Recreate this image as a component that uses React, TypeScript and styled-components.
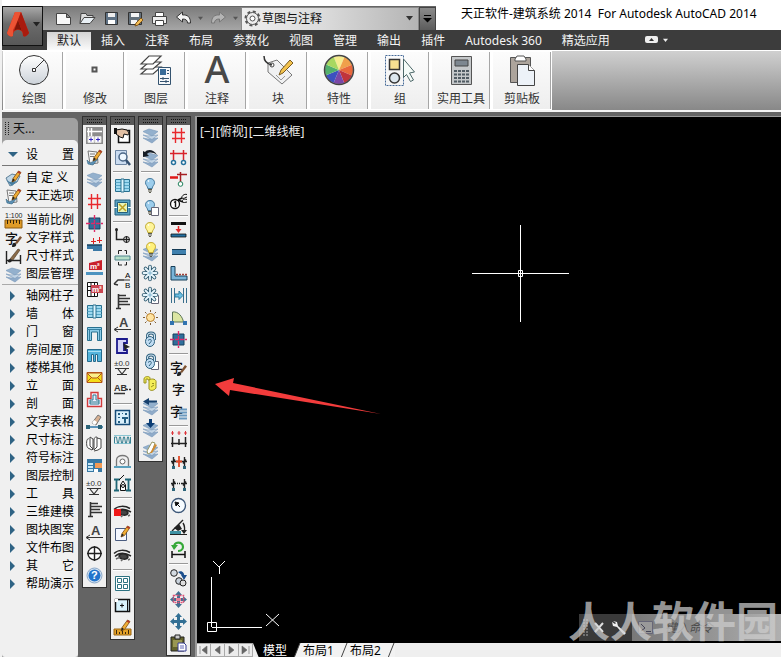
import React from "react";
import styled, { createGlobalStyle, css } from "styled-components";

const GlobalStyle = createGlobalStyle`
  *, *::before, *::after { box-sizing: border-box; }
  html, body { margin: 0; padding: 0; background: #fff; }
  body, button, select, input {
    font-family: "Noto Sans", "Noto Sans CJK SC", sans-serif;
    font-size: 12px;
    color: #111;
  }
  button { border: 0; padding: 0; background: none; cursor: pointer; }
  svg { display: block; flex: none; }
`;

/* ---------- page frame ---------- */

const Shell = styled.div`
  min-height: 100vh;
  display: flex;
  flex-direction: column;
  border-left: 2px solid #f0f0f0;
  overflow: hidden;
`;

const Header = styled.header`
  display: grid;
  grid-template-columns: 41px 1fr;
  grid-template-rows: 30px 20px;
  background: linear-gradient(#fff 0 30px, #3c3c3c 30px);
`;

const AppButton = styled.button`
  grid-row: 1 / 3;
  margin: 6px 0 4px;
  padding-bottom: 4px;
  border: 1px solid #111;
  background: linear-gradient(#a8a8a8, #6a6a6a 45%, #585858);
  display: flex;
  align-items: center;
  justify-content: center;
  gap: 3px;
`;

const TitleBar = styled.div`
  display: flex;
  align-items: stretch;
  min-width: 0;
`;

const QuickAccess = styled.div`
  margin-top: 6px;
  padding-left: 8px;
  display: flex;
  align-items: center;
  background: linear-gradient(#7c7c7c, #a6a6a6);
  border-top: 1px solid #666;
`;

const QuickButton = styled.button<{ $narrow?: boolean }>`
  width: ${(p) => (p.$narrow ? 11 : 24)}px;
  height: 23px;
  display: flex;
  align-items: center;
  justify-content: center;
`;

const Workspace = styled.label`
  width: 178px;
  height: 24px;
  display: flex;
  align-items: center;
  padding: 0 5px 0 2px;
  background: linear-gradient(90deg, #eee, #dcdcdc 45%, #b4b4b4);
  border: 1px solid #888;
`;

const WorkspaceSelect = styled.select`
  appearance: none;
  flex: 1;
  min-width: 0;
  border: 0;
  padding: 0 0 0 1px;
  background: transparent;
`;

const MoreButton = styled.button`
  width: 17px;
  height: 24px;
  display: flex;
  align-items: center;
  justify-content: center;
  background: linear-gradient(#8a8a8a, #5c5c5c);
  border: 1px solid #444;
`;

const Title = styled.h1`
  margin: 0;
  padding-left: 25px;
  font-size: 12px;
  line-height: 28px;
  font-weight: 400;
  white-space: pre;
  color: #000;
`;

const Tabs = styled.nav`
  display: flex;
  align-items: flex-end;
  padding-left: 4px;
  background: #3c3c3c;
`;

const Tab = styled.button<{ $active?: boolean }>`
  height: 18px;
  padding: 0 10px;
  line-height: 18px;
  color: #f4f4f4;
  white-space: nowrap;
  ${(p) =>
    p.$active &&
    css`
      color: #222;
      background: linear-gradient(#d4d4d4, #fafafa);
    `}
`;

const MinimizeTab = styled.button`
  height: 20px;
  margin-left: 25px;
  display: flex;
  align-items: center;
  gap: 5px;
`;

/* ---------- ribbon ---------- */

const Ribbon = styled.section`
  display: flex;
  height: 62px;
  padding-left: 1px;
  border-top: 1px solid #fff;
  border-bottom: 2px solid #f4f4f4;
  background: linear-gradient(#d0d0d0, #888);
`;

const Panel = styled.button`
  width: 61px;
  display: flex;
  flex-direction: column;
  align-items: center;
  background: linear-gradient(#fcfcfc, #eee);
  border: solid #fff;
  border-width: 1px 1px 1px 2px;
  box-shadow: inset -1px 0 #a6a6a6;
`;

const PanelPicture = styled.span`
  height: 38px;
  display: flex;
  align-items: center;
`;

const PanelLabel = styled.span`
  line-height: 20px;
  color: #333;
  white-space: nowrap;
`;

/* ---------- working area ---------- */

const Body = styled.main`
  flex: 1;
  display: flex;
  align-items: flex-start;
  background: #646464;
  padding: 4px 0 1px;
`;

const SideMenu = styled.aside`
  width: 76px;
  align-self: stretch;
  margin-top: 2px;
  margin-right: 4px;
  background: #a0a0a0;
  border-radius: 0 5px 0 0;
`;

const SideTitle = styled.div`
  height: 22px;
  display: flex;
  align-items: center;
  gap: 3px;
  padding-left: 3px;
  line-height: 22px;
`;

const SideContent = styled.div`
  height: calc(100% - 22px);
  background: #f0f0f0;
  border-radius: 5px 5px 3px 3px;
  padding-bottom: 64px;
`;

const MenuHead = styled.button`
  width: 100%;
  height: 26px;
  display: flex;
  align-items: center;
  padding: 4px 4px 0 3px;
  border-bottom: 1px solid #777;
  margin-bottom: 3px;
`;

const MenuRow = styled.button`
  width: 100%;
  height: 18px;
  display: flex;
  align-items: center;
  padding: 0 4px 0 3px;
`;

const MenuMark = styled.span`
  width: 21px;
  flex: none;
`;

const MenuText = styled.span<{ $spread?: boolean }>`
  width: 48px;
  line-height: 18px;
  white-space: ${(p) => (p.$spread ? "normal" : "nowrap")};
  text-align: left;
  text-align-last: ${(p) => (p.$spread ? "justify" : "left")};
  color: #000;
`;

const MenuRule = styled.hr<{ $tight?: boolean }>`
  margin: ${(p) => (p.$tight ? "1px 0 2px" : "2px 0 3px")};
  border: 0;
  border-top: 1px solid #aaa;
`;

const Toolbars = styled.div`
  display: flex;
  align-items: flex-start;
  gap: 3px;
  margin-right: 4px;
`;

const Toolbar = styled.div`
  width: 25px;
  border: 1px solid #303030;
  background: #f0f0f0;
`;

const Grip = styled.div`
  height: 8px;
  background: #585858;
  display: flex;
  align-items: center;
  justify-content: center;
`;

const ToolButton = styled.button`
  display: block;
  height: 22px;
  padding: 2px 3px 3px;
`;

const ToolRule = styled.hr`
  height: 6px;
  margin: 0 2px;
  border: 0;
  background: linear-gradient(transparent 2px, #999 2px 3px, #fff 3px 4px, transparent 4px);
`;

const Glyph = styled.svg`
  overflow: visible;
  font-family: "Liberation Sans", "Noto Sans CJK SC", sans-serif;
`;

/* ---------- drawing area ---------- */

const Drawing = styled.section`
  flex: 1;
  align-self: stretch;
  min-width: 0;
  display: flex;
  flex-direction: column;
  border-left: 2px solid #999;
  border-top: 1px solid #999;
  margin-bottom: -1px;
`;

const Canvas = styled.div`
  position: relative;
  flex: 1;
  background: #000;
  overflow: hidden;
`;

const ViewControls = styled.div`
  display: flex;
  gap: 1px;
  padding: 6px 0 0 3px;
`;

const ViewButton = styled.button`
  color: #eee;
  line-height: 18px;
`;

const Crosshair = styled.svg`
  position: absolute;
  left: 275px;
  top: 108px;
`;

const Arrow = styled.svg`
  position: absolute;
  left: 17px;
  top: 258px;
`;

const UcsIcon = styled.svg`
  position: absolute;
  left: 8px;
  bottom: 6px;
`;

const CommandLine = styled.div`
  position: absolute;
  right: 0;
  bottom: 2px;
  width: 202px;
  height: 27px;
  display: flex;
  background: linear-gradient(90deg, #666, #909090 60%, #b0b0b0);
`;

const CommandTools = styled.div`
  width: 53px;
  display: flex;
  align-items: center;
  gap: 5px;
  padding-left: 4px;
  background: #3a3a3a;
`;

const CommandInput = styled.input`
  flex: 1;
  min-width: 0;
  border: 0;
  padding: 0 0 0 12px;
  background: transparent;
  font-style: italic;
  &::placeholder { color: #4c4c4c; opacity: 1; }
`;

const CommandPrompt = styled.span`
  display: flex;
  align-items: center;
  padding-left: 6px;
`;

const Watermark = styled.div`
  position: absolute;
  right: 3px;
  bottom: 3px;
  font-family: "Noto Sans CJK SC", sans-serif;
  font-size: 42px;
  line-height: 42px;
  font-weight: 700;
  color: rgba(205, 205, 205, 0.72);
  pointer-events: none;
  white-space: nowrap;
`;

const LayoutBar = styled.div`
  height: 15px;
  display: flex;
  background: #efefef;
`;

const LayoutNav = styled.button`
  width: 14px;
  height: 14px;
  display: flex;
  align-items: center;
  justify-content: center;
  background: #ececec;
  border: solid #aaa;
  border-width: 1px 1px 1px 0;
`;

const LayoutTab = styled.button<{ $active?: boolean }>`
  height: 15px;
  padding-left: ${(p) => (p.$active ? 10 : 2)}px;
  display: flex;
  align-items: center;
  gap: 6px;
  line-height: 15px;
  color: ${(p) => (p.$active ? "#fff" : "#000")};
  background: ${(p) => (p.$active ? "#000" : "#f2f2f2")};
  clip-path: ${(p) => (p.$active ? "polygon(0 0, 100% 0, 100% 100%, 6px 100%)" : "none")};
  white-space: nowrap;
`;

/* ---------- small drawings (17 x 17) ---------- */

const Layers = ({ y = 0 }: { y?: number }) => (
  <g transform={`translate(0 ${y})`} stroke="#7f9dbd" strokeWidth=".7">
    <path d="M1 11l5 1 10-1-6 5z" fill="#8fabc9" />
    <path d="M1 8l5 1 10-1-6 4.500z" fill="#c3d5e6" />
    <path d="M1 4.500l6-2.500 9 2.500-6 4.500z" fill="#93b0cd" />
  </g>
);

const Pencil = () => (
  <g>
    <path d="M7 12l1-3.500L13.500 1l2.500 1.500-5.500 8z" fill="#f0ad35" stroke="#7a4a10" strokeWidth=".8" />
    <path d="M7 12l1-3.500 2 1.500z" fill="#222" />
    <path d="M13.500 1l2.500 1.500-1 1.500-2.500-1.500z" fill="#b33a2a" />
  </g>
);

const Hash = () => (
  <path d="M5.500 1v15M11.500 1v15M2 5.500h13M2 11.500h13" stroke="#e8282c" strokeWidth="1.400" fill="none" />
);

const Bulb = ({ fill, edge }: { fill: string; edge: string }) => (
  <g>
    <path d="M8 1.500c-3 0-4.500 2-4.500 4.300 0 2.400 2.300 3.200 2.300 5.700h4.400c0-2.500 2.300-3.300 2.300-5.700C12.500 3.500 11 1.500 8 1.500z" fill={fill} stroke={edge} />
    <path d="M6 12.500h4M6 14h4M7 15.500h2" stroke="#5b5b4d" />
    <path d="M6 4.500l1-1" stroke="#fff" strokeWidth="1.500" />
  </g>
);

const Sheet = () => <path d="M9.500 8.500h7v8h-7z" fill="#fff" stroke="#667" />;

const flake = "M8 1.500v13M1.500 8h13M3.500 3.500l9 9M12.500 3.500l-9 9";
const Snow = () => (
  <g fill="none" strokeLinecap="round">
    <path d={flake} stroke="#2c586e" strokeWidth="3.600" />
    <path d={flake} stroke="#e8f6fd" strokeWidth="1.800" />
    <path d="M6 8h4M8 6v4" stroke="#7fb2cc" strokeWidth="1" />
  </g>
);

const Lock = ({ fill }: { fill: string }) => (
  <g stroke="#30627f" fill="none">
    <path d="M5.500 8V5c0-4 7-4 7 0v4" stroke="#30627f" strokeWidth="3" />
    <path d="M5.500 8V5c0-4 7-4 7 0v4" stroke="#d5e7f4" strokeWidth="1.200" />
    <ellipse cx="8" cy="10.500" rx="4.500" ry="5" fill={fill} />
    <path d="M6 9.500c2-2 4-1 3 1l-2 2.500" />
  </g>
);

const Column = () => (
  <g>
    <path d="M3 3h11v11H3z" fill="#2f6f9b" stroke="#17405f" />
    <path d="M8.500 0v17M0 8.500h17" stroke="#e02868" strokeWidth="1.400" strokeDasharray="4 1" />
  </g>
);

const Glass = () => (
  <g stroke="#29708f">
    <path d="M1.500 2.500h14v12h-14z" fill="#9ed9f0" />
    <path d="M1.500 5.500h14M1.500 8.500h14M1.500 11.500h14" stroke="#58a6c6" />
    <path d="M7 2v13h3V2z" fill="#dff6ff" />
  </g>
);

const Steps = () => (
  <path d="M4.500 1v15M2 15.500h5M5 2.500h7M5 5.500h11M5 8.500h9M5 11.500h11" stroke="#333" strokeWidth="1.600" fill="none" />
);

const Level = () => (
  <g>
    <text x="0" y="7" fontSize="8" fill="#333">±0.0</text>
    <path d="M1 9.500h14M4 10l4 5 4-5M3 15.500h10" stroke="#333" strokeWidth="1.200" fill="none" />
  </g>
);

const LetterA = () => (
  <g>
    <text x="5" y="12" fontSize="13" fontWeight="700" fill="#444">A</text>
    <path d="M17 14.500H1M4 12l-4 2.500L4 17" stroke="#333" fill="none" />
  </g>
);

const Eye = () => (
  <g fill="none" stroke="#262626" strokeWidth="1.500">
    <path d="M0 6.500c4-4 11-4 16-1M1 9.500c4-4 10-4 16-.5" />
    <path d="M5 9c1-3 8-3 9 1-1 3-8 3-9-1z" fill="#444" />
    <path d="M2 12c2-1 3-2 4-1M7 14l2-2M14 13l2-1" stroke="#666" />
  </g>
);

const Zi = () => <text x="0" y="13" fontSize="13" fontWeight="500" fill="#111">字</text>;

const DimBase = () => (
  <g>
    <path d="M3.500 4v9M14.500 4v9M1 8.500h16" stroke="#222" strokeWidth="1.400" />
    <path d="M2 10.500l3-4M13 10.500l3-4" stroke="#222" strokeWidth="1.500" />
    <path d="M2 13h3v3H2zM13 13h3v3h-3z" fill="#2c6479" />
  </g>
);

const Move = ({ color }: { color: string }) => (
  <path d="M8.500 0l3.500 4h-2v3h3V5l4 3.500-4 3.500v-2h-3v3h2l-3.500 4L5 13h2v-3H4v2L0 8.500 4 5v2h3V4H5z" fill={color} />
);

const Brush = () => (
  <g>
    <path d="M10 13l5-7 2 1.500-5 6.500z" fill="#7d5333" />
    <path d="M7 17c0-4 2-5 4-3.500 1 2-1 4-4 3.500z" fill="#222" />
  </g>
);

const SmallLayers = () => <Layers y={2} />;

const Check = () => (
  <g>
    <path d="M2 2l9 1 1 11-8 1z" fill="#f7f7f7" stroke="#777" />
    <path d="M4 5h5M4 7.500h4" stroke="#777" />
    <path d="M1 11l3 3 8-4-5 6-5-1z" fill="#5e93b8" stroke="#2f617f" strokeWidth=".6" />
  </g>
);

const icons: Record<string, React.ReactNode> = {
  settings: <><path d="M0 0h17v17H0z" fill="#8d8d8d" /><path d="M1 4.500h15M2.500 1v8M5.500 1v8" stroke="#fff" strokeWidth="1.500" /><path d="M2 9.500h6v6H2zM9 9.500h6v6H9z" fill="#fff" stroke="#ddd" /><path d="M3 12.500h4M5 10.500v4M10 12.500h4M12 10.500v4" stroke="#3426c0" /></>,
  options: <><Check /><Pencil /></>,
  layers: <Layers />,
  grid: <Hash />,
  column: <Column />,
  wall: <><path d="M1 8h15v6H7v-2H1z" fill="#3a78a6" /><path d="M1 8h15" stroke="#17405f" strokeWidth="1.500" /><path d="M7.500 1v6M13.500 0v6M5 4.500h5M11 3.500h5" stroke="#d22" /></>,
  area: <><path d="M0 13h17v3H0z" fill="#4c93c0" /><path d="M3 4l13-3v10H3z" fill="#c9202a" /><text x="4" y="10" fontSize="8" fontWeight="700" fill="#fff">m²</text></>,
  areaTable: <><path d="M1.500 1.500h10v14h-10zM1.500 5.500h10M1.500 9.500h10M5 2v13M8.500 2v13" stroke="#111" fill="#fff" /><path d="M5 4h12v8H5z" fill="#c94550" /><text x="6" y="11" fontSize="8" fontWeight="700" fill="#fff">m²</text></>,
  window: <Glass />,
  arch: <><path d="M1.500 2.500h14v13h-4V7h-6v8.500h-4z" fill="#8ccce8" stroke="#29708f" /><path d="M1 4.500h15M3.500 5v10M13.500 5v10" stroke="#387e9e" /></>,
  opening: <><path d="M1.500 2.500h14v12h-4v-7h-2v7h-2v-7h-2v7h-4z" fill="#54b4dc" stroke="#246a8c" /><path d="M2 4.500h13" stroke="#a8e0f4" /></>,
  roof: <><path d="M1 3.500h15v10H1z" fill="#f4dc18" stroke="#b3541a" /><path d="M1 4l5 5h5l5-5z" fill="#fbf08a" stroke="#b3541a" /><path d="M1 13l5-5M16 13l-5-5" stroke="#b3541a" fill="none" /></>,
  stair: <><path d="M5 1.500h7v6h3.500v8h-14v-8H5z" fill="#eef" stroke="#d23a3a" strokeWidth="1.400" /><path d="M7 4h3v5h3v4H4V9h3zM4 11h9" fill="none" stroke="#27798b" /></>,
  eraser: <><path d="M0 14h17" stroke="#2c76a8" strokeWidth="1.500" /><path d="M0 12h4v4H0zM12 12h4v4h-4z" fill="#2c6479" /><path d="M6 10l6-8 3 2-5 8z" fill="#d7b092" stroke="#777" /><path d="M6 10l2-3 3 2-2 3z" fill="#fff" /></>,
  book: <path d="M3 4c-3-2-3 8-1 9l4 2 1-1V4L4 2v9l3 3M8 5c0-3 2-3 3-3v10l-3 3zM11 3l4 1v9l-3 2-4 1" fill="#fff" stroke="#444" />,
  table: <><path d="M1 2h15v13H1z" fill="#3778a4" /><path d="M2 6h5v2H2zM2 9h5v2H2zM2 12h5v2H2z" fill="#c7e8f8" /><path d="M9 6h7v5H9z" fill="#f39a54" /><path d="M8 12h4v3H8z" fill="#fff" /></>,
  level: <Level />,
  steps: <Steps />,
  letter: <LetterA />,
  compass: <><circle cx="8.500" cy="8.500" r="6.500" fill="#fff" stroke="#222" strokeWidth="1.400" /><path d="M8.500 1v15M1 8.500h15" stroke="#222" strokeWidth="1.400" /></>,
  help: <><circle cx="8.500" cy="8.500" r="7.500" fill="#d4e2f0" stroke="#8ba8c8" /><circle cx="8.500" cy="8.500" r="6" fill="#2274cc" /><text x="5" y="12" fontSize="11" fontWeight="700" fill="#fff">?</text></>,

  hand: <><path d="M4.500 3.500h11v12h-11z" fill="#fff" stroke="#111" strokeWidth="1.500" /><path d="M2 3l6-1 5 1 2 3-1 2-4-1-1 4-3-1-4-3z" fill="#e2c0a4" stroke="#111" /><path d="M0 1h3v6H0z" fill="#111" /></>,
  preview: <><path d="M1.500 1.500h11v14h-11z" fill="#cbdcf0" stroke="#6d85a2" /><circle cx="9" cy="8" r="4" fill="#eef7ff" stroke="#4b6787" strokeWidth="1.500" /><path d="M12 11l4 5" stroke="#344f6e" strokeWidth="2.500" /></>,
  crossBox: <><path d="M1 1h15v15H1z" fill="#59a2c3" stroke="#245f7b" /><path d="M3.500 3.500h10v10h-10z" fill="#e8f5b9" stroke="#245f7b" /><path d="M5 5l7 7M12 5l-7 7" stroke="#bc9f22" strokeWidth="1.500" /><path d="M0 8.500h3M14 8.500h3" stroke="#fff" /></>,
  node: <><path d="M2.500 3v9.500H10" stroke="#222" strokeWidth="1.500" fill="none" /><circle cx="2.500" cy="2.500" r="1.500" fill="#222" /><circle cx="12.500" cy="12.500" r="3" fill="#bbb" stroke="#222" /><path d="M12.500 9v7M9 12.500h7" stroke="#222" /></>,
  breakWall: <><path d="M1 7h15v4H1z" fill="#b6dec8" stroke="#50868e" /><path d="M4.500 5V1.500H8M12.500 5V1.500h-2M4.500 13v3H8M12.500 13v3h-2" stroke="#222" fill="none" /></>,
  leader: <><path d="M0 13l4-4h6M0 13l4 1" stroke="#333" fill="none" strokeWidth="1.400" /><text x="11" y="7" fontSize="8">A</text><text x="11" y="17" fontSize="8">B</text><path d="M10 9h6" stroke="#333" /></>,
  bracket: <><path d="M3 2h10v4h-3v7h3v3H3z" fill="#d4d4f8" stroke="#1c1a8c" strokeWidth="1.800" /><path d="M9 6l7 4-3 1-2 3z" fill="#222" /></>,
  abText: <><text x="0" y="10" fontSize="9" fontWeight="700" fill="#333">AB</text><path d="M0 12.500h11M12 8.500h2M15 8.500h2" stroke="#333" strokeWidth="1.500" /></>,
  plan: <><path d="M1.500 1.500h14v14h-14z" fill="#d9effb" stroke="#154b78" strokeWidth="1.500" /><path d="M4 4h2v2H4zM8 4h1v1H8zM11 4h2v2h-2zM4 8h2v1H4zM8 8h6v2H8zM4 12h2v2H4zM10 10h2v4h-2z" fill="#245e83" /></>,
  wave: <><path d="M0 4.500h17M0 12.500h17" stroke="#8cc6d3" /><path d="M.5 12V6h2l1 6h1l1-6h1l1 6h1l1-6h1l1 6h1l1-6h1l1 6h1V6" fill="none" stroke="#3a8293" /></>,
  dome: <><path d="M2.500 13V7c0-6 12-6 12 0v6" fill="#eee" stroke="#777" strokeWidth="1.300" /><circle cx="8.500" cy="8.500" r="2.500" fill="#fff" stroke="#666" /><path d="M0 13h17v2H0z" fill="#5aa0bd" /></>,
  elevation: <><path d="M0 4.500h6M11 4.500h6M2.500 4v12M14.500 4v12M0 15.500h5M12 15.500h5" stroke="#1f6676" strokeWidth="1.800" /><path d="M5 5l5-5" stroke="#111" /><path d="M6.500 15.500V10L9 6l2.500 4v5.500z" fill="#fff" stroke="#111" /><circle cx="9" cy="11" r="1.500" fill="#fff" stroke="#111" /></>,
  redEye: <><Eye /><path d="M0 6h7v7H0z" fill="#f01818" /></>,
  note: <><path d="M1.500 3.500h11v12h-11z" fill="#f4f7ff" stroke="#4a5c80" /><Pencil /></>,
  eye: <Eye />,
  squares: <path d="M1.500 1.500h14v14h-14zM3.500 3.500h4v4h-4zM9.500 3.500h4v4h-4zM3.500 9.500h4v4h-4zM9.500 9.500h4v4h-4z" fill="#fff" stroke="#2d7281" />,
  frame: <><path d="M1.500 2.500h14v12h-14z" fill="#d8f2fc" stroke="#111" strokeWidth="1.500" /><path d="M13.500 3v11M6 8.500h4M8 6.500v4" stroke="#111" /><path d="M1 2h3v3H1z" fill="#fff" /></>,
  ruler: <><path d="M0 10h17v6H0z" fill="#e2a12a" stroke="#9c6613" /><path d="M2.500 11v4M5.500 13v2M8.500 11v4M11.500 13v2M14.500 11v4" stroke="#3d2b10" /><Pencil /></>,

  layerBack: <><SmallLayers /><path d="M15 6C12 0 5 0 3 3L1 2v6l6-1-2-2c2-2 6-2 10 1z" fill="#151c25" /></>,
  bulbOff: <Bulb fill="#9ccdec" edge="#457a9d" />,
  bulbOffSheet: <><Bulb fill="#9ccdec" edge="#457a9d" /><Sheet /></>,
  bulbOn: <Bulb fill="#fff59a" edge="#c0ab36" />,
  bulbLayers: <><SmallLayers /><g transform="translate(1 -2)"><Bulb fill="#fff17c" edge="#c5aa32" /></g></>,
  snow: <Snow />,
  snowSheet: <><Sheet /><Snow /></>,
  sun: <><circle cx="8.500" cy="8.500" r="4" fill="#ffe3a0" stroke="#b67b28" /><path d="M8.500 1v2M8.500 14v2M1 8.500h2M14 8.500h2M3 3l1.500 1.500M12.500 12.500L14 14M14 3l-1.500 1.500M4.500 12.500L3 14" stroke="#805e35" /></>,
  lock: <Lock fill="#c0dcf2" />,
  lockSheet: <><Sheet /><Lock fill="#c0dcf2" /></>,
  unlock: <g fill="#f5ee56" stroke="#999121"><path d="M2 8V4c0-3 6-3 6-1v2H6V4H4v4z" /><path d="M7 5c3-2 8-1 7 3v5c-2 3-6 3-7 1z" /><path d="M10 8.500h2M9 12l3-2" /></g>,
  layerLeft: <><SmallLayers /><path d="M15 3.500H7V1L1 4.500 7 8V5.500h8z" fill="#17406c" /></>,
  layerDown: <><SmallLayers /><path d="M7 0h3v4h3L8.500 9 4 4h3z" fill="#0c3e75" /></>,
  layerEdit: <><SmallLayers /><path d="M5 10l5-9 3 1-3 9-4 2z" fill="#fff" stroke="#996" /><path d="M8 12l5-9 2 1-5 8z" fill="#d08c34" /></>,

  gridCircles: <><path d="M3.500 1v10M13.500 1v10M0 4.500h17" stroke="#d8232b" strokeWidth="1.500" /><circle cx="3.500" cy="13.500" r="2" fill="#fff" stroke="#26719c" strokeWidth="1.500" /><circle cx="13.500" cy="13.500" r="2" fill="#fff" stroke="#26719c" strokeWidth="1.500" /></>,
  gridAdd: <><path d="M0 6.500h8" stroke="#e01818" strokeWidth="2.500" /><path d="M7 3.500h10M10.500 1v10" stroke="#a51e22" strokeWidth="1.500" /><circle cx="10.500" cy="13" r="2.300" fill="#fff" stroke="#22835d" /></>,
  gridCut: <><circle cx="5" cy="11" r="4.500" fill="#fff" stroke="#111" strokeWidth="1.300" /><path d="M4 9.500l1.500-1V14M8 7l4-2M8 7l5 2" stroke="#111" fill="none" strokeWidth="1.400" /><path d="M17 1.500c-3-1-6 2-5 3.500s4-1 5-1M17 6.500c-3-1-5 0-4.500 2S16 9 17 9" fill="none" stroke="#111" /></>,
  beams: <><path d="M1 1h15v3H1z" fill="#111" /><path d="M1 13h15v3H1z" fill="#236fa0" stroke="#111" strokeWidth=".8" /><path d="M8.500 5v4" stroke="#e02626" strokeWidth="1.500" /><path d="M5.500 8h6l-3 4z" fill="#e02626" /></>,
  bar: <><path d="M2 7h14v4H2z" fill="#3f80ae" /><path d="M2 6.500h14M2 11.500h14" stroke="#163b55" /></>,
  wallEdge: <><path d="M1 11V1.500h4V11h12v4H1z" fill="#79b4d8" stroke="#173e58" /><path d="M6 9.500h11" stroke="#a04038" strokeWidth="1.500" strokeDasharray="2 1" /></>,
  width: <><path d="M1.500 1v15M4.500 1v15M13.500 1v15M16.500 1v15" stroke="#386e8c" /><path d="M5 7h4V4l4 4.500-4 4V10H5z" fill="#6cbfe3" stroke="#2c7c9e" /></>,
  arc: <><path d="M2.500 13V3c6-1 10 5 11 10z" fill="#dce6a2" stroke="#597355" /><path d="M0 12h4v4H0zM13 12h4v4h-4z" fill="#3274b0" /></>,
  textStyle: <><Zi /><Brush /></>,
  text: <g transform="translate(2 0)"><Zi /></g>,
  textLines: <><Zi /><path d="M9 6.500h8M9 9.500h8M9 12.500h8M9 15.500h8" stroke="#6a99bf" strokeWidth="2" /></>,
  dimMarks: <><path d="M2.500 6v10M9 8v6M15.500 6v10M1 12.500h16" stroke="#222" strokeWidth="1.500" /><path d="M2.500 0v4M1 2h3M9 0v4M7.500 2h3M15.500 0v4M14 2h3" stroke="#dd343b" /></>,
  dimCross: <><DimBase /><path d="M9 3v11M6 8.500h6" stroke="#e14a28" strokeWidth="1.800" /></>,
  dimDots: <><DimBase /><path d="M6 8.500h6" stroke="#f0f0f0" strokeWidth="3" strokeDasharray="1 1" /></>,
  radius: <><circle cx="8.500" cy="8.500" r="7" fill="#f7fcff" stroke="#3d5778" strokeWidth="1.300" /><path d="M10 10L6 6M5 5l4 1-3 3z" fill="#111" stroke="#111" /></>,
  angle: <><path d="M2 12L13 1M13 4c2 3 2 6 1 10" stroke="#222" strokeWidth="1.400" fill="none" /><path d="M4 9l5-4 3 5-4 2zM11 11h6l-3 4z" fill="#222" /><path d="M0 12h11v4H0z" fill="#3f91a3" /><path d="M0 15.500h17" stroke="#222" /></>,
  reload: <><path d="M4 7C3 0 13 0 13 6c0 3-3 4-5 4" fill="none" stroke="#35a838" strokeWidth="2.200" /><path d="M1 4h7L4 9z" fill="#35a838" /><path d="M2 10v7M15 10v7M2 13.500h13" stroke="#111" strokeWidth="1.500" /></>,
  link: <><circle cx="4" cy="4" r="3.300" fill="#d4dbe2" stroke="#222" /><circle cx="9" cy="12" r="3.300" fill="#c9d2dc" stroke="#222" /><circle cx="13" cy="14" r="3" fill="#ddd" stroke="#222" /><path d="M8 3c4-2 7 1 6 5M11 6h6l-3 5z" fill="#1c4f8d" /></>,
  moveRed: <><Move color="#406f91" /><path d="M3.500 4.500h10v7h-10z" fill="none" stroke="#e35175" strokeWidth="1.500" strokeDasharray="2 1" /><path d="M6 7h5v3H6z" fill="#e98098" /></>,
  move: <Move color="#326f94" />,
  paste: <><path d="M1 2h13v14H1z" fill="#64642c" stroke="#222" /><path d="M5 0h5v4H5z" fill="#ccc" stroke="#222" /><path d="M3 5h9v7H3z" fill="#999752" /><path d="M8 8h6l2 2v6H8z" fill="#fff" stroke="#343b91" /><path d="M10 11h4M10 13h4" stroke="#6269b8" /></>,
  custom: <><path d="M1 8l6-4 8 2-3 6-7 4z" fill="#bfd6e6" stroke="#5e8098" /><path d="M1 10l4 2 7-1-5 5z" fill="#497fa1" /><Pencil /></>,
  scale: <><text x="0" y="6" fontSize="7" fill="#222">1:100</text><path d="M0 8h17v8H0z" fill="#df9b27" stroke="#8e5c12" /><path d="M2.500 8v4M5.500 8v3M8.500 8v4M11.500 8v3M14.500 8v4" stroke="#342309" /></>,
  dimStyle: <><path d="M1.500 3v13M15.500 7v9M1 12.500h15" stroke="#222" strokeWidth="1.400" /><path d="M5 11l8-10 2 1-7 10z" fill="#8a6a48" stroke="#4a3524" strokeWidth=".6" /><path d="M3 14c0-3 2-4 4-2 0 2-2 3-4 2z" fill="#222" /></>,
};

const Icon = ({ name }: { name: string }) => (
  <Glyph width="17" height="17" viewBox="0 0 17 17" aria-hidden="true">{icons[name]}</Glyph>
);

const Caret = ({ color = "#333", size = 7 }: { color?: string; size?: number }) => (
  <svg width={size} height="5" viewBox="0 0 7 5"><path d="M0 0h7L3.500 4.500z" fill={color} /></svg>
);

const GripDots = () => (
  <svg width="15" height="4" viewBox="0 0 15 4"><path d="M0 .5h15M0 3.500h15" stroke="#111" strokeDasharray="1 1" /></svg>
);

/* ---------- quick access drawings ---------- */

const quickDrawings: { id: string; narrow?: boolean; art: React.ReactNode }[] = [
  { id: "新建", art: <path d="M1.500 3.500h10l4 4v7h-14zM11.500 3.500v4h4" fill="#f8f8f8" stroke="#444" /> },
  { id: "打开", art: <><path d="M1 13.500l1-10h5l1 2h6v2" fill="#ddd" stroke="#444" /><path d="M1 13.500l4-6h11l-5 6z" fill="#e9f0f5" stroke="#444" /></> },
  { id: "保存", art: <><path d="M2.500 2.500h12v12h-12z" fill="#5e7184" stroke="#333" /><path d="M5 3h7v4H5z" fill="#eee" /><path d="M5 10h7v4H5z" fill="#fff" /></> },
  { id: "另存为", art: <><path d="M1.500 2.500h13v12h-13z" fill="#64717c" stroke="#333" /><path d="M4 3h8v4H4zM4 10h6v4H4z" fill="#f4f4f4" /><path d="M8 16l1-3 5-5 2 2-5 5z" fill="#f4bd55" stroke="#84591b" /></> },
  { id: "打印", art: <><path d="M4.500 2.500h8v5h-8z" fill="#fff" stroke="#444" /><path d="M1.500 6.500h14v7h-14z" fill="#eee" stroke="#444" /><path d="M4.500 10.500h8v5h-8z" fill="#fff" stroke="#444" /></> },
  { id: "放弃", art: <path d="M1.500 7l6-5v3c5-.5 8 2 8 8h-3c0-3-2-4-5-4v3z" fill="#f4f4f4" stroke="#333" /> },
  { id: "放弃列表", narrow: true, art: null },
  { id: "重做", art: <path d="M15.500 7l-6-5v3c-5-.5-8 2-8 8h3c0-3 2-4 5-4v3z" fill="#b4b4b4" stroke="#777" /> },
  { id: "重做列表", narrow: true, art: null },
];

/* ---------- ribbon drawings (32 x 32) ---------- */

const wheel = ["#f6ec90", "#f0a04b", "#e8683c", "#c0343c", "#7a46a8", "#3c50c0", "#52b06c", "#a8d860"];
const wheelPoint = (i: number) => {
  const a = ((i * 45 - 112) * Math.PI) / 180;
  return `${16 + 14 * Math.cos(a)} ${16 + 14 * Math.sin(a)}`;
};

const panels: { label: string; art: React.ReactNode }[] = [
  { label: "绘图", art: <><circle cx="16" cy="16" r="14.500" fill="url(#disc)" stroke="#333" /><path d="M17.500 14.500L26 6" stroke="#333" /><path d="M14.500 14.500h3v3h-3z" fill="#fff" stroke="#333" /></> },
  { label: "修改", art: <path d="M13.500 13.500h4v4h-4z" fill="#fff" stroke="#555" strokeWidth="2" /> },
  { label: "图层", art: <><g fill="#fff" stroke="#444" strokeWidth="1.200"><path d="M1 20l8-7h12l-8 7z" /><path d="M1 15l8-7h12l-8 7z" /><path d="M1 10l8-8h12l-8 8z" /></g><path d="M18.500 13.500h12v17h-12z" fill="#f6f8fa" stroke="#34536f" /><path d="M20 15h6v6h-6z" fill="#386b98" /><path d="M27 16.500h2M27 19.500h2M20 24.500h9M20 27.500h9M23 23v3M26 26v3" stroke="#34536f" /></> },
  { label: "注释", art: <text x="16" y="29" fontSize="38" fontWeight="500" textAnchor="middle" fill="#484848">A</text> },
  { label: "块", art: <><path d="M6 9l9-3 15 15-10 9L6 18z" fill="#f0f1f2" stroke="#777" /><circle cx="10" cy="11" r="2" fill="#fff" stroke="#444" /><path d="M10 11C5 10 2 7 2 2" fill="none" stroke="#333" strokeWidth="1.500" /><path d="M17 21l2-5L28 6l3 3-10 10z" fill="#f3c34e" stroke="#795b22" /><path d="M14 21l5 5 4-4" fill="none" stroke="#999" /></> },
  { label: "特性", art: <>{wheel.map((c, i) => <path key={c} d={`M16 16L${wheelPoint(i)}A14 14 0 0 1 ${wheelPoint(i + 1)}z`} fill={c} />)}<circle cx="16" cy="16" r="14.500" fill="none" stroke="#444" strokeWidth="1.500" /></> },
  { label: "组", art: <><path d="M1.500 1.500h18v30h-18z" fill="none" stroke="#466a98" strokeDasharray="2 1" /><path d="M5.500 5.500h10v10h-10z" fill="#f6df91" stroke="#333" strokeWidth="1.500" /><circle cx="10.500" cy="24" r="5" fill="#dde7ee" stroke="#333" strokeWidth="1.500" /><path d="M19.500 5l11 13-5 1 4 7-3 1.500-4-7-3 3z" fill="#f5fbf8" stroke="#4c6768" /></> },
  { label: "实用工具", art: <><path d="M6.500 2.500h20v28h-20z" fill="#c5c8ca" stroke="#555" /><path d="M10 6h13v6H10z" fill="#7d8790" stroke="#444" /><path d="M9 17h15M9 20.500h15M9 24h15M9 27.500h15" stroke="#4f5a62" strokeWidth="2" strokeDasharray="3 1" /></> },
  { label: "剪贴板", art: <><path d="M4.500 3.500h20v25h-20z" fill="#aca49c" stroke="#555" /><path d="M9 5l2-3h7l2 3v2H9z" fill="#fff" stroke="#555" /><path d="M11.500 10.500h11l6 6v15h-17z" fill="#edf2f8" stroke="#444" /><path d="M22.500 10.500v6h6" fill="#fff" stroke="#444" /></> },
];

const tabNames = ["默认", "插入", "注释", "布局", "参数化", "视图", "管理", "输出", "插件", "Autodesk 360", "精选应用"];

const menuTools: [string, string][][] = [
  [["custom", "自 定 义"], ["options", "天正选项"]],
  [["scale", "当前比例"], ["textStyle", "文字样式"], ["dimStyle", "尺寸样式"], ["layers", "图层管理"]],
];

const menuGroups = [
  "轴网柱子", "墙 体", "门 窗", "房间屋顶", "楼梯其他", "立 面", "剖 面", "文字表格", "尺寸标注",
  "符号标注", "图层控制", "工 具", "三维建模", "图块图案", "文件布图", "其 它", "帮助演示",
];

const toolbars: string[] = [
  "settings options layers grid column wall area areaTable window arch opening roof stair eraser book table level steps letter compass help",
  "hand preview | window crossBox | node breakWall leader steps letter bracket level abText | plan wave dome elevation | redEye note eye | squares frame ruler",
  "layers layerBack | bulbOff bulbOffSheet bulbOn bulbLayers snow snowSheet sun lock lockSheet unlock layerLeft layerDown layerEdit",
  "grid gridCircles gridAdd gridCut | beams bar wallEdge width arc column | textStyle text textLines | dimMarks dimCross dimDots radius angle reload | link moveRed move paste",
];

const navArt = ["M2 1v8M9 1v8L4 5z", "M8 1v8L3 5z", "M3 1v8l5-4z", "M2 1v8l5-4zM9 1v8"];

const Slash = () => (
  <svg width="8" height="15" viewBox="0 0 8 15">
    <path d="M1 15L7 0h1v15z" fill="#f2f2f2" />
    <path d="M1 15L7 0" stroke="#444" fill="none" />
  </svg>
);

export default function App() {
  return (
    <Shell>
      <GlobalStyle />
      <Header>
        <AppButton aria-label="应用程序菜单">
          <svg width="24" height="26" viewBox="0 0 24 26">
            <path d="M1 22L9 1h6l8 21c-2 3-4 4-6 3 0-4-2-6-5-6s-5 2-5 6c-2 1-5 0-6-3z" fill="#c92c18" />
            <path d="M9 1h6l-3 8-5 10v6c-2 1-5 0-6-3z" fill="#ec5334" />
            <path d="M12 9l4 11c-2-2-6-2-8 0z" fill="#801609" />
            <path d="M15 1l8 21c-2 3-4 4-6 3 0-2 0-4-1-5L12 9z" fill="#a91b0e" />
          </svg>
          <Caret color="#222" />
        </AppButton>
        <TitleBar>
          <QuickAccess>
            {quickDrawings.map((q) => (
              <QuickButton key={q.id} $narrow={q.narrow} aria-label={q.id}>
                {q.art ? <svg width="17" height="17" viewBox="0 0 17 17">{q.art}</svg> : <Caret color="#555" size={5} />}
              </QuickButton>
            ))}
            <Workspace>
              <svg width="17" height="19" viewBox="0 0 17 17">
                <circle cx="8.500" cy="8.500" r="7" fill="none" stroke="#555" strokeWidth="2" strokeDasharray="3 2.500" />
                <circle cx="8.500" cy="8.500" r="6" fill="#eee" stroke="#555" />
                <circle cx="8.500" cy="8.500" r="2.500" fill="#fff" stroke="#555" />
              </svg>
              <WorkspaceSelect aria-label="工作空间"><option>草图与注释</option></WorkspaceSelect>
              <Caret />
            </Workspace>
            <MoreButton aria-label="自定义快速访问工具栏">
              <svg width="9" height="9" viewBox="0 0 9 9"><path d="M1 1.500h7" stroke="#000" /><path d="M0 4h9L4.500 8.500z" fill="#000" /></svg>
            </MoreButton>
          </QuickAccess>
          <Title>{"天正软件-建筑系统 2014  For Autodesk AutoCAD 2014"}</Title>
        </TitleBar>
        <Tabs>
          {tabNames.map((t, i) => <Tab key={t} $active={i === 0}>{t}</Tab>)}
          <MinimizeTab aria-label="最小化功能区">
            <svg width="13" height="8" viewBox="0 0 13 8"><rect width="13" height="7" rx="2" fill="#eee" /><path d="M4 5h5L6.500 2z" fill="#333" /></svg>
            <Caret color="#eee" size={5} />
          </MinimizeTab>
        </Tabs>
      </Header>

      <Ribbon>
        {panels.map((p) => (
          <Panel key={p.label}>
            <PanelPicture>
              <svg width="32" height="33" viewBox="0 0 32 33" overflow="visible">
                <defs><linearGradient id="disc" x2="0" y2="1"><stop stopColor="#fff" /><stop offset="1" stopColor="#ccd2d9" /></linearGradient></defs>
                {p.art}
              </svg>
            </PanelPicture>
            <PanelLabel>{p.label}</PanelLabel>
          </Panel>
        ))}
      </Ribbon>

      <Body>
        <SideMenu>
          <SideTitle>
            <svg width="5" height="14" viewBox="0 0 5 14"><path d="M.5 0v14M3.500 0v14" stroke="#222" strokeDasharray="1 1" /></svg>
            天...
          </SideTitle>
          <SideContent>
            <MenuHead>
              <MenuMark><svg width="17" height="7" viewBox="0 0 17 7"><path d="M3 1h10L8 6z" fill="#2f6384" /></svg></MenuMark>
              <MenuText $spread>设 置</MenuText>
            </MenuHead>
            {menuTools.map((group, i) => (
              <React.Fragment key={i}>
                {group.map(([icon, label]) => (
                  <MenuRow key={label}><MenuMark><Icon name={icon} /></MenuMark><MenuText>{label}</MenuText></MenuRow>
                ))}
                <MenuRule $tight={i === 1} />
              </React.Fragment>
            ))}
            {menuGroups.map((label) => (
              <MenuRow key={label}>
                <MenuMark><svg width="17" height="10" viewBox="0 0 17 10"><path d="M5 0l5 5-5 5z" fill="#2f6384" /></svg></MenuMark>
                <MenuText $spread={label.includes(" ")}>{label}</MenuText>
              </MenuRow>
            ))}
          </SideContent>
        </SideMenu>

        <Toolbars>
          {toolbars.map((bar) => (
            <Toolbar key={bar} role="toolbar">
              <Grip><GripDots /></Grip>
              {bar.split(" ").map((name, i) =>
                name === "|" ? <ToolRule key={i} /> : <ToolButton key={i} aria-label={name}><Icon name={name} /></ToolButton>
              )}
            </Toolbar>
          ))}
        </Toolbars>

        <Drawing>
          <Canvas>
            <ViewControls>
              <ViewButton>[−]</ViewButton>
              <ViewButton>[俯视]</ViewButton>
              <ViewButton>[二维线框]</ViewButton>
            </ViewControls>
            <Crosshair width="97" height="97" viewBox="0 0 97 97">
              <path d="M48.500 0v97M0 48.500h97M46.500 45.500h4v6h-4z" stroke="#fff" fill="none" />
            </Crosshair>
            <Arrow width="170" height="42" viewBox="0 0 170 42">
              <path d="M1 9L20 3l-1 5 148 31L16 15l-1 6z" fill="#f33c3c" />
            </Arrow>
            <UcsIcon width="76" height="78" viewBox="0 0 76 78">
              <path d="M6.500 18v50M2.500 63.500h9v9h-9zM7 68.500h50M8 2l6 6 6-6M14.500 8v7M61 55l13 12M74 55L61 67" stroke="#fff" fill="none" />
            </UcsIcon>
            <CommandLine>
              <CommandTools>
                <svg width="5" height="17" viewBox="0 0 5 17"><path d="M1 0v17M4 0v17" stroke="#aaa" strokeDasharray="2 1" /></svg>
                <svg width="13" height="13" viewBox="0 0 13 13"><path d="M2 2l8 9M10 2L2 11" stroke="#ddd" strokeWidth="2" /></svg>
                <svg width="17" height="17" viewBox="0 0 17 17"><path d="M2 2l4 1 1 4 8 7-2 2-7-8-4-1-1-4 3 2 1-1z" fill="#eee" /></svg>
              </CommandTools>
              <CommandPrompt>
                <svg width="15" height="14" viewBox="0 0 15 14"><path d="M.5.5h14v12H.5z" fill="#999" stroke="#667" /><path d="M3 3l4 4-4 3M8 10.500h5" stroke="#445" fill="none" /></svg>
              </CommandPrompt>
              <CommandInput aria-label="命令" placeholder="键入命令" />
            </CommandLine>
            <Watermark>人人软件园</Watermark>
          </Canvas>
          <LayoutBar>
            {navArt.map((d) => (
              <LayoutNav key={d} aria-label="切换布局"><svg width="11" height="10" viewBox="0 0 11 10"><path d={d} fill="#666" stroke="#666" strokeWidth=".6" /></svg></LayoutNav>
            ))}
            <LayoutTab $active>模型<Slash /></LayoutTab>
            <LayoutTab>布局1<Slash /></LayoutTab>
            <LayoutTab>布局2<Slash /></LayoutTab>
          </LayoutBar>
        </Drawing>
      </Body>
    </Shell>
  );
}
